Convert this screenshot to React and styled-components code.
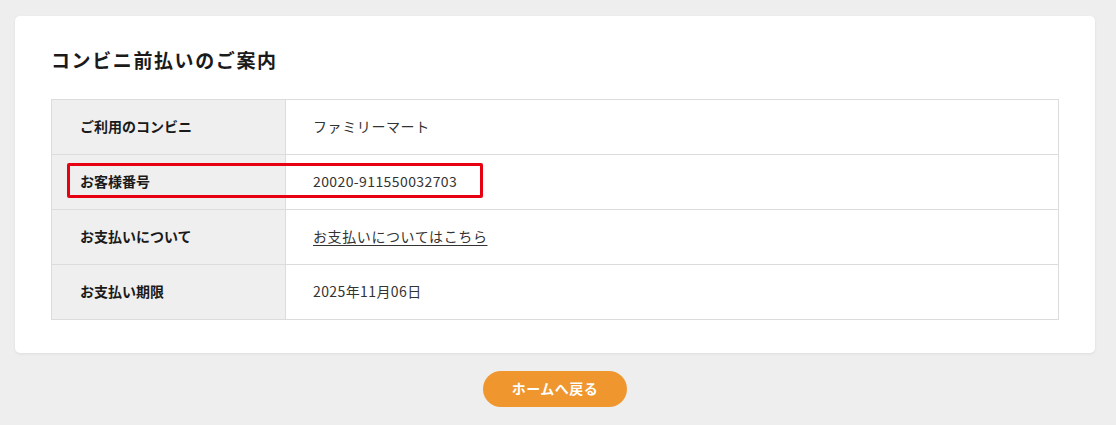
import React from "react";
import styled, { createGlobalStyle } from "styled-components";

const GlobalStyle = createGlobalStyle`
  html, body { margin: 0; padding: 0; background: #eeeeee; }
  body {
    font-family: "Noto Sans CJK JP", "Noto Sans", sans-serif;
    color: #333;
  }
`;

const Page = styled.div`
  padding: 16px 21px 19px 15px;
  display: flex;
  flex-direction: column;
  align-items: center;
`;

const Card = styled.section`
  box-sizing: border-box;
  width: 100%;
  background: #fff;
  border-radius: 5px;
  box-shadow: 0 1px 3px rgba(0, 0, 0, 0.07);
  padding: 31px 36px 33px;
`;

const Title = styled.h2`
  margin: 0 0 24px;
  font-size: 19px;
  line-height: 26px;
  padding-bottom: 2px;
  font-weight: 700;
  letter-spacing: 1.6px;
  color: #1a1a1a;
`;

const Table = styled.div`
  border: 1px solid #dcdcdc;
`;

const Row = styled.div`
  position: relative;
  display: grid;
  grid-template-columns: 234px 1fr;
  height: 54px;
  border-top: ${(p) => (p.$first ? "none" : "1px solid #dcdcdc")};
`;

const Label = styled.div`
  display: flex;
  align-items: center;
  padding: 0 0 3px 28px;
  background: #efefef;
  border-right: 1px solid #dcdcdc;
  font-size: 14px;
  font-weight: 700;
  color: #1a1a1a;
`;

const Value = styled.div`
  display: flex;
  align-items: center;
  padding: 0 0 3px 27px;
  font-size: 14px;
  color: #333;
  letter-spacing: ${(p) => (p.$spaced ? "0.6px" : "0.4px")};
`;

const Link = styled.a`
  color: #333;
  text-decoration: underline;
  text-underline-offset: 3px;
`;

const Highlight = styled.div`
  position: absolute;
  left: 15px;
  top: 8px;
  width: 416px;
  height: 35px;
  box-sizing: border-box;
  border: 3px solid #e60012;
  border-radius: 2px;
  pointer-events: none;
`;

const HomeButton = styled.a`
  margin-top: 18px;
  display: inline-flex;
  align-items: center;
  justify-content: center;
  width: 144px;
  height: 36px;
  padding-bottom: 2px;
  box-sizing: border-box;
  border-radius: 18px;
  background: #f0962f;
  color: #fff;
  font-size: 14px;
  font-weight: 700;
  letter-spacing: 0.5px;
  text-decoration: none;
`;

const rows = [
  { label: "ご利用のコンビニ", value: "ファミリーマート", spaced: true },
  { label: "お客様番号", value: "20020-911550032703", highlight: true },
  { label: "お支払いについて", value: "お支払いについてはこちら", link: true, spaced: true },
  { label: "お支払い期限", value: "2025年11月06日" },
];

export default function App() {
  return (
    <>
      <GlobalStyle />
      <Page>
        <Card>
          <Title>コンビニ前払いのご案内</Title>
          <Table>
            {rows.map((r, i) => (
              <Row key={r.label} $first={i === 0}>
                <Label>{r.label}</Label>
                <Value $spaced={r.spaced}>
                  {r.link ? <Link href="#">{r.value}</Link> : r.value}
                </Value>
                {r.highlight && <Highlight />}
              </Row>
            ))}
          </Table>
        </Card>
        <HomeButton href="#">ホームへ戻る</HomeButton>
      </Page>
    </>
  );
}
